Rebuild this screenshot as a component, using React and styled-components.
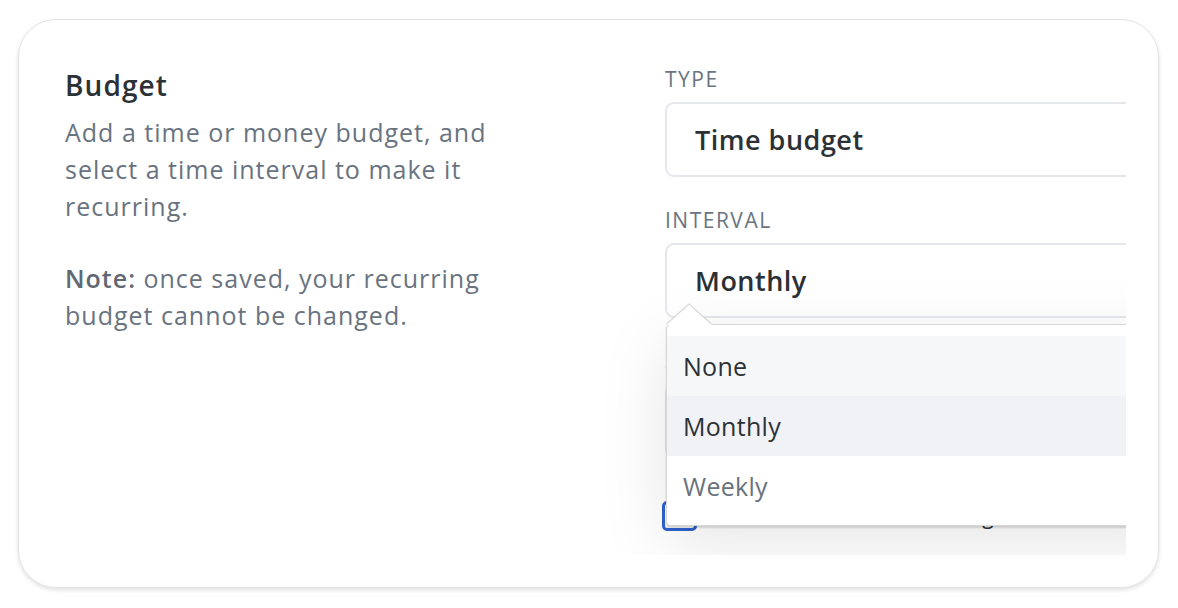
import React from "react";
import styled, { createGlobalStyle } from "styled-components";

const GlobalStyle = createGlobalStyle`
  html, body {
    margin: 0;
    padding: 0;
    background: #ffffff;
  }
  body {
    font-family: "Open Sans", "Noto Sans", sans-serif;
    -webkit-font-smoothing: antialiased;
  }
`;

const INTERVALS = [
  { label: "None", tone: "soft" },
  { label: "Monthly", tone: "active" },
  { label: "Weekly", tone: "muted" },
];

const App = () => {
  return (
    <Page>
      <GlobalStyle />
      <Card>
        <Intro>
          <Title>Budget</Title>
          <Text>
            Add a time or money budget, and select a time interval to make it
            recurring.
          </Text>
          <Text>
            <strong>Note:</strong> once saved, your recurring budget cannot be
            changed.
          </Text>
        </Intro>

        <Panel>
          <Label>Type</Label>
          <Select>Time budget</Select>

          <Label $space={30}>Interval</Label>
          <SelectWrap>
            <Select>Monthly</Select>
            <Dropdown>
              <Caret width="48" height="22" viewBox="0 0 48 22">
                <polygon points="0,22 23,1 46,22" fill="#ffffff" />
                <polyline
                  points="0.5,21 23,1 45.5,21"
                  fill="none"
                  stroke="#d9d9d9"
                  strokeWidth="1.2"
                />
              </Caret>
              {INTERVALS.map((item) => (
                <Option key={item.label} $tone={item.tone}>
                  {item.label}
                </Option>
              ))}
            </Dropdown>
          </SelectWrap>

          <Label $space={30}>Start date</Label>
          <Select>Today</Select>

          <CheckRow>
            <Checkbox />
            <CheckText>Send an alert when reaching limit</CheckText>
          </CheckRow>
        </Panel>
      </Card>
    </Page>
  );
};

const Page = styled.div`
  padding: 19px 19px 20px 18px;
`;

const Card = styled.section`
  box-sizing: border-box;
  height: 569px;
  border: 1.5px solid #e3e3e3;
  border-radius: 38px;
  box-shadow: 0 2px 4px rgba(0, 0, 0, 0.13);
  padding: 46px 32px 32px 46px;
  display: grid;
  grid-template-columns: 1fr 461px;
`;

const Intro = styled.div`
  display: flex;
  flex-direction: column;
`;

const Title = styled.h2`
  margin: 1px 0 11px;
  font-size: 28px;
  line-height: 36px;
  font-weight: 600;
  letter-spacing: 1.1px;
  color: #2c3136;
`;

const Text = styled.p`
  margin: 0 0 35px;
  max-width: 440px;
  font-size: 25px;
  line-height: 37px;
  letter-spacing: 1px;
  color: #697380;

  strong {
    font-weight: 600;
    color: #5f6873;
  }
`;

const Panel = styled.div`
  position: relative;
  overflow: hidden;
  margin-left: -100px;
  padding-left: 100px;
  display: flex;
  flex-direction: column;
  align-items: flex-start;
`;

const Label = styled.div`
  margin-top: ${(p) => p.$space || 0}px;
  margin-bottom: 10px;
  font-size: 21px;
  line-height: 26px;
  font-weight: 500;
  letter-spacing: 1.5px;
  text-transform: uppercase;
  color: #6a7480;
`;

const SelectWrap = styled.div`
  position: relative;
`;

const Select = styled.div`
  box-sizing: border-box;
  width: 520px;
  height: 75px;
  display: flex;
  align-items: center;
  padding-left: 28px;
  border: 2px solid #e4e7eb;
  border-radius: 9px;
  background: #ffffff;
  font-size: 27px;
  font-weight: 600;
  letter-spacing: 0.5px;
  color: #2c3136;
`;

const Dropdown = styled.div`
  position: absolute;
  z-index: 2;
  top: calc(100% + 6px);
  left: 1px;
  width: 520px;
  box-sizing: border-box;
  padding: 11px 0 9px;
  background: #ffffff;
  border: 1px solid #d6d6d6;
  border-radius: 4px;
  box-shadow: 0 2px 2px rgba(0, 0, 0, 0.14), 0 18px 70px rgba(0, 0, 0, 0.1);
`;

const Caret = styled.svg`
  position: absolute;
  top: -22px;
  left: -1px;
  display: block;
`;

const Option = styled.div`
  height: 60px;
  display: flex;
  align-items: center;
  padding-left: 16px;
  font-size: 25px;
  letter-spacing: 0.3px;
  color: ${(p) => (p.$tone === "muted" ? "#69727d" : "#2c3136")};
  background: ${(p) =>
    p.$tone === "soft" ? "#f6f7f9" : p.$tone === "active" ? "#f1f2f5" : "#ffffff"};
`;

const CheckRow = styled.div`
  display: flex;
  align-items: flex-start;
  gap: 18px;
  margin-top: 42px;
  margin-left: -3px;
`;

const Checkbox = styled.span`
  box-sizing: border-box;
  width: 35px;
  height: 30px;
  border: 3px solid #2e62d0;
  border-radius: 5px;
`;

const CheckText = styled.span`
  font-size: 21px;
  line-height: 30px;
  color: #2c3136;
  white-space: nowrap;
`;

export default React.memo(App);
